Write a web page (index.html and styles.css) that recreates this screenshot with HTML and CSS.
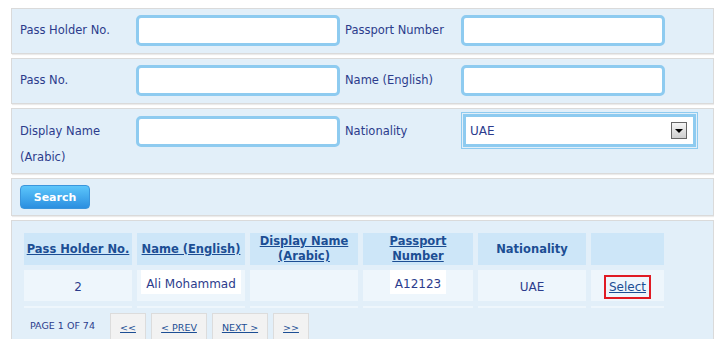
FILE: index.html
```html
<!DOCTYPE html>
<html lang="en">
<head>
  <meta charset="UTF-8">
  <title>Pass Holder Search</title>
  <link rel="stylesheet" href="styles.css">
</head>
<body>
  <div class="page">
    <!-- Search filters -->
    <div class="panel">
      <label class="field-label">Pass Holder No.</label>
      <input type="text" class="field-input">
      <label class="field-label">Passport Number</label>
      <input type="text" class="field-input">
    </div>

    <div class="panel">
      <label class="field-label">Pass No.</label>
      <input type="text" class="field-input">
      <label class="field-label">Name (English)</label>
      <input type="text" class="field-input">
    </div>

    <div class="panel panel-tall">
      <label class="field-label">Display Name (Arabic)</label>
      <input type="text" class="field-input">
      <label class="field-label">Nationality</label>
      <div class="select-wrap">
        <div class="select-box">
          <span class="select-value">UAE</span>
          <span class="select-arrow"></span>
        </div>
      </div>
    </div>

    <div class="panel panel-actions">
      <button class="search-btn">Search</button>
    </div>

    <!-- Results -->
    <div class="panel panel-results">
      <table class="results">
        <thead>
          <tr>
            <th class="col-1"><a href="#">Pass Holder No.</a></th>
            <th class="col-2"><a href="#">Name (English)</a></th>
            <th class="col-3"><a href="#">Display Name (Arabic)</a></th>
            <th class="col-4"><a href="#">Passport Number</a></th>
            <th class="col-5">Nationality</th>
            <th class="col-6"></th>
          </tr>
        </thead>
        <tbody>
          <tr>
            <td>2</td>
            <td class="top"><span class="value-box">Ali Mohammad</span></td>
            <td></td>
            <td class="top"><span class="value-box">A12123</span></td>
            <td>UAE</td>
            <td><a href="#" class="select-link">Select</a></td>
          </tr>
          <tr class="spacer-row">
            <td></td><td></td><td></td><td></td><td></td><td></td>
          </tr>
        </tbody>
      </table>

      <div class="pager">
        <span class="page-info">PAGE 1 OF 74</span>
        <a href="#" class="page-btn btn-short">&lt;&lt;</a>
        <a href="#" class="page-btn btn-long">&lt; PREV</a>
        <a href="#" class="page-btn btn-long">NEXT &gt;</a>
        <a href="#" class="page-btn btn-short">&gt;&gt;</a>
      </div>
    </div>
  </div>
</body>
</html>
```

FILE: styles.css
```css
/* General */
body {
  margin: 0;
  background: #ffffff;
  font-family: "DejaVu Sans", Verdana, sans-serif;
  font-size: 11.5px;
  color: #2c3c8c;
}

.page {
  padding: 8px 0 0 11px;
  width: 703px;
  height: 331px;
  overflow: hidden;
}

/* Filter panels */
.panel {
  display: flex;
  align-items: flex-start;
  background: #e2eff9;
  border: 1px solid #dadada;
  box-shadow: 1px 1px 1px rgba(0, 0, 0, 0.08);
  padding: 6px 8px 7px 8px;
  margin-bottom: 4px;
}

.field-label {
  width: 116px;
  line-height: 26px;
  margin-top: 2px;
}

.field-input {
  box-sizing: border-box;
  width: 204px;
  height: 31px;
  border: 3px solid #8ecbf0;
  border-radius: 5px;
  background: #fff;
  margin: 0 5px 0 0;
  padding: 0 6px;
}

.panel-tall {
  padding-top: 7px;
  padding-bottom: 3px;
}

/* Nationality dropdown */
.select-wrap {
  border: 1px solid #8ecbf0;
  padding: 1px;
  margin-top: -4px;
  width: 233px;
}

.select-box {
  display: flex;
  align-items: center;
  justify-content: space-between;
  height: 27px;
  border: 3px solid #8ecbf0;
  background: #fff;
  padding: 0 6px 0 4px;
}

.select-value {
  font-size: 12px;
  color: #2c3c8c;
}

.select-arrow {
  position: relative;
  width: 14px;
  height: 15px;
  border: 1px solid #666;
  background: linear-gradient(#f4f4f4, #cfcfcf);
}

.select-arrow::after {
  content: "";
  position: absolute;
  left: 3px;
  top: 6px;
  border-left: 4px solid transparent;
  border-right: 4px solid transparent;
  border-top: 4px solid #000;
}

/* Search button */
.panel-actions {
  padding: 6px 8px 6px 8px;
}

.search-btn {
  width: 70px;
  height: 24px;
  border: 1px solid #3a95dc;
  border-radius: 4px;
  background: linear-gradient(#5cc6fb, #2b8fe0);
  color: #fff;
  font-family: "DejaVu Sans", Verdana, sans-serif;
  font-size: 11px;
  font-weight: bold;
  cursor: pointer;
}

/* Results table */
.panel-results {
  display: block;
  padding: 7px 8px 0 8px;
  height: 200px;
  border-bottom: none;
}

.results {
  border-collapse: separate;
  border-spacing: 5px;
  margin: 0 0 0 -1px;
}

.results th {
  background: #cde6f8;
  height: 32px;
  padding: 0;
  font-size: 11.5px;
  font-weight: bold;
  color: #1c4e94;
  line-height: 15px;
  text-align: center;
}

.results th a {
  color: #1c4e94;
}

.col-1, .col-2, .col-3, .col-5 { width: 108px; }
.col-4 { width: 110px; }
.col-6 { width: 73px; }

.results td {
  background: #eef6fc;
  height: 29px;
  padding: 2px 0 0 0;
  text-align: center;
  font-size: 12px;
  color: #2c3c8c;
}

.results td.top {
  vertical-align: top;
  padding-top: 0;
}

.value-box {
  display: inline-block;
  background: #fff;
  padding: 7px 5px 2px 5px;
  line-height: 15px;
}

.spacer-row td {
  height: 2px;
  padding: 0;
  background: #eef6fc;
}

.select-link {
  display: inline-block;
  margin-top: 1px;
  color: #1c4e94;
  border: 2px solid #e01b24;
  padding: 2px 3px;
  line-height: 16px;
}

/* Pagination */
.pager {
  display: flex;
  align-items: flex-start;
  margin-top: 0;
}

.page-info {
  width: 80px;
  font-size: 9.5px;
  padding: 7px 0 0 10px;
}

.page-btn {
  display: inline-block;
  box-sizing: border-box;
  height: 28px;
  line-height: 28px;
  margin-right: 5px;
  background: #f2f2f2;
  border: 1px solid #dcdcdc;
  font-size: 9.5px;
  text-align: center;
  color: #1c4e94;
}

.btn-short { width: 36px; }
.btn-long { width: 56px; }
```
